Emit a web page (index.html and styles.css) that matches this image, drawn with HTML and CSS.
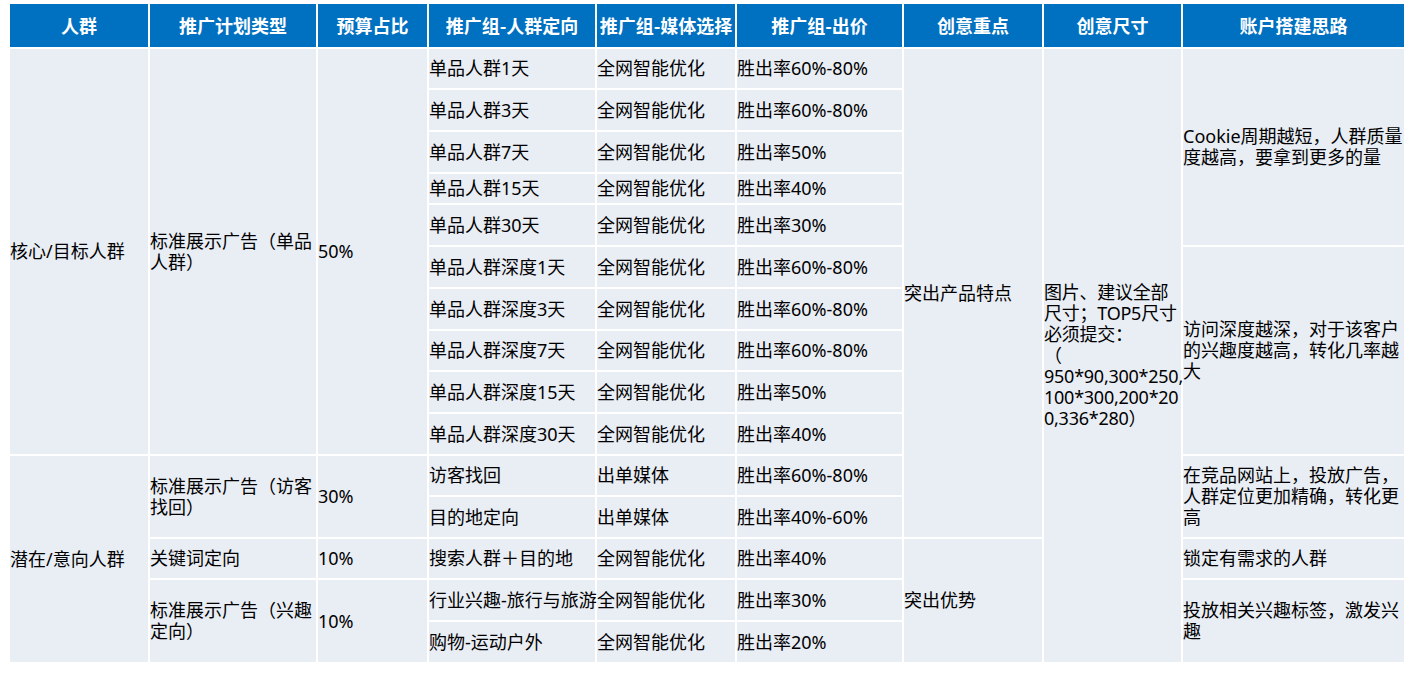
FILE: index.html
```html
<!DOCTYPE html>
<html lang="zh-CN">
<head>
<meta charset="utf-8">
<title>账户搭建思路</title>
<link rel="stylesheet" href="styles.css">
</head>
<body>
<table class="plan">
  <colgroup>
    <col class="c1"><col class="c2"><col class="c3"><col class="c4"><col class="c5"><col class="c6"><col class="c7"><col class="c8"><col class="c9">
  </colgroup>
  <thead>
    <tr class="hd">
      <th>人群</th><th>推广计划类型</th><th>预算占比</th><th>推广组-人群定向</th><th>推广组-媒体选择</th><th>推广组-出价</th><th>创意重点</th><th>创意尺寸</th><th>账户搭建思路</th>
    </tr>
  </thead>
  <tbody>
    <tr class="h39">
      <td rowspan="10">核心/目标人群</td>
      <td rowspan="10">标准展示广告（单品人群）</td>
      <td rowspan="10">50%</td>
      <td class="nw">单品人群1天</td><td class="nw">全网智能优化</td><td class="nw">胜出率60%-80%</td>
      <td rowspan="12">突出产品特点</td>
      <td rowspan="15" class="size">图片、建议全部<br>尺寸；TOP5尺寸<br>必须提交：<br>（<br>950*90,300*250,<br>100*300,200*20<br>0,336*280）</td>
      <td rowspan="5">Cookie周期越短，人群质量度越高，要拿到更多的量</td>
    </tr>
    <tr class="h40"><td class="nw">单品人群3天</td><td class="nw">全网智能优化</td><td class="nw">胜出率60%-80%</td></tr>
    <tr class="h40"><td class="nw">单品人群7天</td><td class="nw">全网智能优化</td><td class="nw">胜出率50%</td></tr>
    <tr class="h29"><td class="nw">单品人群15天</td><td class="nw">全网智能优化</td><td class="nw">胜出率40%</td></tr>
    <tr class="h40"><td class="nw">单品人群30天</td><td class="nw">全网智能优化</td><td class="nw">胜出率30%</td></tr>
    <tr class="h40">
      <td class="nw">单品人群深度1天</td><td class="nw">全网智能优化</td><td class="nw">胜出率60%-80%</td>
      <td rowspan="5">访问深度越深，对于该客户的兴趣度越高，转化几率越大</td>
    </tr>
    <tr class="h40"><td class="nw">单品人群深度3天</td><td class="nw">全网智能优化</td><td class="nw">胜出率60%-80%</td></tr>
    <tr class="h39"><td class="nw">单品人群深度7天</td><td class="nw">全网智能优化</td><td class="nw">胜出率60%-80%</td></tr>
    <tr class="h40"><td class="nw">单品人群深度15天</td><td class="nw">全网智能优化</td><td class="nw">胜出率50%</td></tr>
    <tr class="h40"><td class="nw">单品人群深度30天</td><td class="nw">全网智能优化</td><td class="nw">胜出率40%</td></tr>
    <tr class="h39">
      <td rowspan="5">潜在/意向人群</td>
      <td rowspan="2">标准展示广告（访客找回）</td>
      <td rowspan="2">30%</td>
      <td class="nw">访客找回</td><td class="nw">出单媒体</td><td class="nw">胜出率60%-80%</td>
      <td rowspan="2">在竞品网站上，投放广告，人群定位更加精确，转化更高</td>
    </tr>
    <tr class="h40"><td class="nw">目的地定向</td><td class="nw">出单媒体</td><td class="nw">胜出率40%-60%</td></tr>
    <tr class="h39">
      <td>关键词定向</td><td>10%</td>
      <td class="nw">搜索人群＋目的地</td><td class="nw">全网智能优化</td><td class="nw">胜出率40%</td>
      <td rowspan="3">突出优势</td>
      <td>锁定有需求的人群</td>
    </tr>
    <tr class="h40">
      <td rowspan="2">标准展示广告（兴趣定向）</td><td rowspan="2">10%</td>
      <td class="nw">行业兴趣-旅行与旅游</td><td class="nw">全网智能优化</td><td class="nw">胜出率30%</td>
      <td rowspan="2">投放相关兴趣标签，激发兴趣</td>
    </tr>
    <tr class="h40"><td class="nw">购物-运动户外</td><td class="nw">全网智能优化</td><td class="nw">胜出率20%</td></tr>
  </tbody>
</table>
</body>
</html>
```

FILE: styles.css
```css
html, body {
  margin: 0;
  padding: 0;
  background: #ffffff;
}

.plan {
  margin: 2px 0 0 8px;
  border-collapse: separate;
  border-spacing: 2px;
  table-layout: fixed;
  width: 1398px;
  font-family: "Noto Sans", "Noto Sans CJK SC", sans-serif;
  font-size: 18px;
  line-height: 21px;
  color: #000000;
}

.c1 { width: 138px; }
.c2 { width: 166px; }
.c3 { width: 109px; }
.c4 { width: 166px; }
.c5 { width: 138px; }
.c6 { width: 165px; }
.c7 { width: 138px; }
.c8 { width: 137px; }
.c9 { width: 221px; }

.plan th,
.plan td {
  padding: 0;
  vertical-align: middle;
  overflow: visible;
}

.plan th {
  height: 43px;
  background: #0070c0;
  color: #ffffff;
  font-family: "Noto Sans CJK SC", sans-serif;
  font-weight: 700;
  font-size: 18px;
  text-align: center;
  white-space: nowrap;
}

.plan td {
  background: #e9edf4;
  text-align: left;
}

.h39 > td { height: 39px; }
.h40 > td { height: 40px; }
.h29 > td { height: 29px; }

.plan td[rowspan] { height: auto; }

.nw {
  white-space: nowrap;
}

.size {
  white-space: nowrap;
  letter-spacing: -0.25px;
}
```
